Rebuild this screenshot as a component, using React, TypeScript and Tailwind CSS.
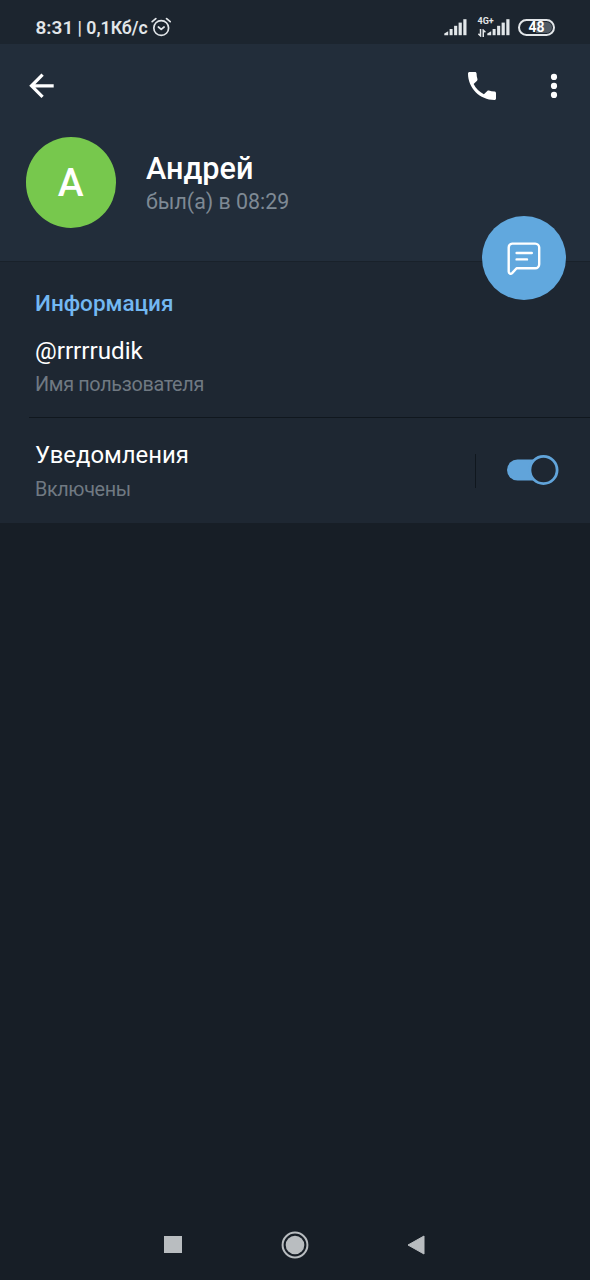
import React from "react";

function AlarmIcon() {
  return (
    <svg width="20" height="20" viewBox="0 0 20 20" fill="none" stroke="#e2e6e9" strokeWidth="1.7" strokeLinecap="round" strokeLinejoin="round">
      <circle cx="10.2" cy="11" r="7.4" />
      <path d="M1.2 4.6 4.8 1.6M19.2 4.6 15.6 1.6" />
      <path d="m7.4 10 2.8 2.4 2.9-2.4" />
    </svg>
  );
}

function SignalBars() {
  return (
    <svg width="23" height="17" viewBox="0 0 23 17" fill="#e2e6e9">
      <path d="M.3 16.2v-1.6L4.2 12.2v4z" />
      <rect x="5.6" y="10" width="3" height="6.2" />
      <rect x="10.1" y="6.8" width="3.1" height="9.4" />
      <rect x="14.6" y="3.6" width="3.2" height="12.6" />
      <rect x="19.3" y=".2" width="3.2" height="16" />
    </svg>
  );
}

function StatusBar() {
  return (
    <header className="flex h-[44px] shrink-0 items-center bg-[#1c252f] pt-[10px] pr-[35px] pl-[35.5px] text-[#e2e6e9]">
      <span className="mt-[2px] w-[39px] text-[19px] leading-[22px] font-semibold whitespace-nowrap">8:31</span>
      <span className="mt-[1px] w-[76.5px] pl-[3px] text-[17.7px] leading-[22px] font-semibold whitespace-nowrap">| 0,1Кб/с</span>
      <AlarmIcon />
      <div className="ml-auto flex items-center">
        <SignalBars />
        <div className="ml-[10.5px] flex h-[20px] w-[9.5px] flex-col justify-between">
          <span className="text-[9px] leading-[9px] font-bold whitespace-nowrap">4G+</span>
          <svg width="8" height="8" viewBox="0 0 7 7" fill="none" stroke="#e2e6e9" strokeWidth="1.3">
            <path d="M2.2 0v6L.3 4.2M4.6 7V1l1.9 1.8" />
          </svg>
        </div>
        <SignalBars />
        <div className="ml-[8px] flex h-[17px] w-[37px] rounded-full border-2 border-[#e2e6e9] p-px">
          <div className="flex w-full items-center justify-center rounded-full bg-linear-to-r from-transparent from-50% to-[#515b64] to-50% text-[14px] leading-[13px] font-bold text-white">
            48
          </div>
        </div>
      </div>
    </header>
  );
}

function ProfileHeader() {
  return (
    <section className="relative h-[217px] shrink-0 bg-[#222d3a]">
      <div className="flex h-[84px] items-center pr-[32px] pl-[29px]">
        <svg width="26" height="26" viewBox="0 0 26 26" fill="none" stroke="#fff" strokeWidth="3.2">
          <path d="M24.7 12.8H3M13.6 1.7 2.5 12.8l11.1 11.1" />
        </svg>
        <svg className="ml-auto" width="28" height="28" viewBox="3 3 18 18" fill="#fff">
          <path d="M6.62 10.79c1.44 2.83 3.76 5.14 6.59 6.59l2.2-2.2c.27-.27.67-.36 1.02-.24 1.12.37 2.33.57 3.57.57.55 0 1 .45 1 1V20c0 .55-.45 1-1 1-9.39 0-17-7.61-17-17 0-.55.45-1 1-1h3.5c.55 0 1 .45 1 1 0 1.25.2 2.45.57 3.57.11.35.03.74-.25 1.02l-2.2 2.2z" />
        </svg>
        <svg className="ml-[54px]" width="8" height="26" viewBox="0 0 8 26" fill="#fff">
          <circle cx="4" cy="3.9" r="3.1" />
          <circle cx="4" cy="12.9" r="3.1" />
          <circle cx="4" cy="21.9" r="3.1" />
        </svg>
      </div>
      <div className="flex pt-[9px] pl-[25.5px]">
        <div className="flex size-[90.5px] items-center justify-center rounded-full bg-[#77c84d] pt-[2px] text-[39px] leading-[46px] font-medium text-white">
          А
        </div>
        <div className="ml-[30px] pt-[13px]">
          <h1 className="text-[30.6px] leading-[38px] font-medium whitespace-nowrap text-white">Андрей</h1>
          <p className="text-[21.4px] leading-[28px] whitespace-nowrap text-[#7e8994]">был(а) в 08:29</p>
        </div>
      </div>
      <button className="absolute top-[171.5px] left-[481.5px] z-10 flex size-[84.5px] items-center justify-center rounded-full bg-[#61a8de]">
        <svg width="34" height="34" viewBox="0 0 34 34" fill="none" stroke="#fff" strokeWidth="2.4" strokeLinecap="round" strokeLinejoin="round">
          <path d="M5.2 2.6h23a4 4 0 0 1 4 4v16.6a4 4 0 0 1-4 4H9.6l-4.5 4.9c-1.2 1.2-3.4.5-3.4-1.4V6.6a3.9 3.9 0 0 1 3.5-4z" />
          <path d="M9.6 12h15.2M9.6 18.4h10.4" />
        </svg>
      </button>
    </section>
  );
}

function InfoSection() {
  return (
    <section className="flex h-[262px] shrink-0 flex-col border-t border-[#19212a] bg-[#1e2732]">
      <div className="h-[155px] pt-[27px] pl-[35px]">
        <h2 className="text-[22.5px] leading-[28px] font-medium whitespace-nowrap text-[#73b8f2]">Информация</h2>
        <p className="mt-[18px] text-[24.2px] leading-[32px] whitespace-nowrap text-white">@rrrrrudik</p>
        <p className="mt-[5px] text-[19.8px] leading-[26px] tracking-[-0.32px] whitespace-nowrap text-[#707982]">Имя пользователя</p>
      </div>
      <div className="ml-[29px] h-px bg-[#10171e]" />
      <div className="flex items-center pr-[31px] pl-[35px]">
        <div className="pt-[21px]">
          <p className="text-[23.9px] leading-[32px] whitespace-nowrap text-white">Уведомления</p>
          <p className="mt-[6px] text-[19.8px] leading-[26px] tracking-[-0.36px] whitespace-nowrap text-[#707982]">Включены</p>
        </div>
        <div className="mt-[20px] ml-auto h-[34px] w-px bg-[#10171e]" />
        <svg className="mt-[19px] ml-[31px]" width="52" height="32" viewBox="0 0 52 32">
          <rect x="0" y="5.5" width="44" height="21" rx="10.5" fill="#61a4da" />
          <circle cx="36.5" cy="16" r="13.6" fill="#1e2732" stroke="#61a4da" strokeWidth="2.8" />
        </svg>
      </div>
    </section>
  );
}

function NavigationBar() {
  return (
    <nav className="mt-auto flex h-[71px] items-center pr-[165px] pl-[164px]">
      <div className="size-[17.5px] bg-[#b9bdc0]" />
      <svg className="ml-[99.5px]" width="28" height="28" viewBox="0 0 28 28">
        <circle cx="14" cy="14" r="12.4" fill="none" stroke="#b9bdc0" strokeWidth="2" />
        <circle cx="14" cy="14" r="9.3" fill="#b9bdc0" />
      </svg>
      <svg className="ml-auto" width="18" height="20" viewBox="0 0 18 20" fill="#b9bdc0" stroke="#b9bdc0" strokeLinejoin="round">
        <path d="M17 1v18L1 10z" />
      </svg>
    </nav>
  );
}

export default function App() {
  return (
    <main className="flex h-[1280px] w-[590px] flex-col overflow-hidden bg-[#171e26] font-['Roboto',sans-serif]">
      <StatusBar />
      <ProfileHeader />
      <InfoSection />
      <NavigationBar />
    </main>
  );
}
